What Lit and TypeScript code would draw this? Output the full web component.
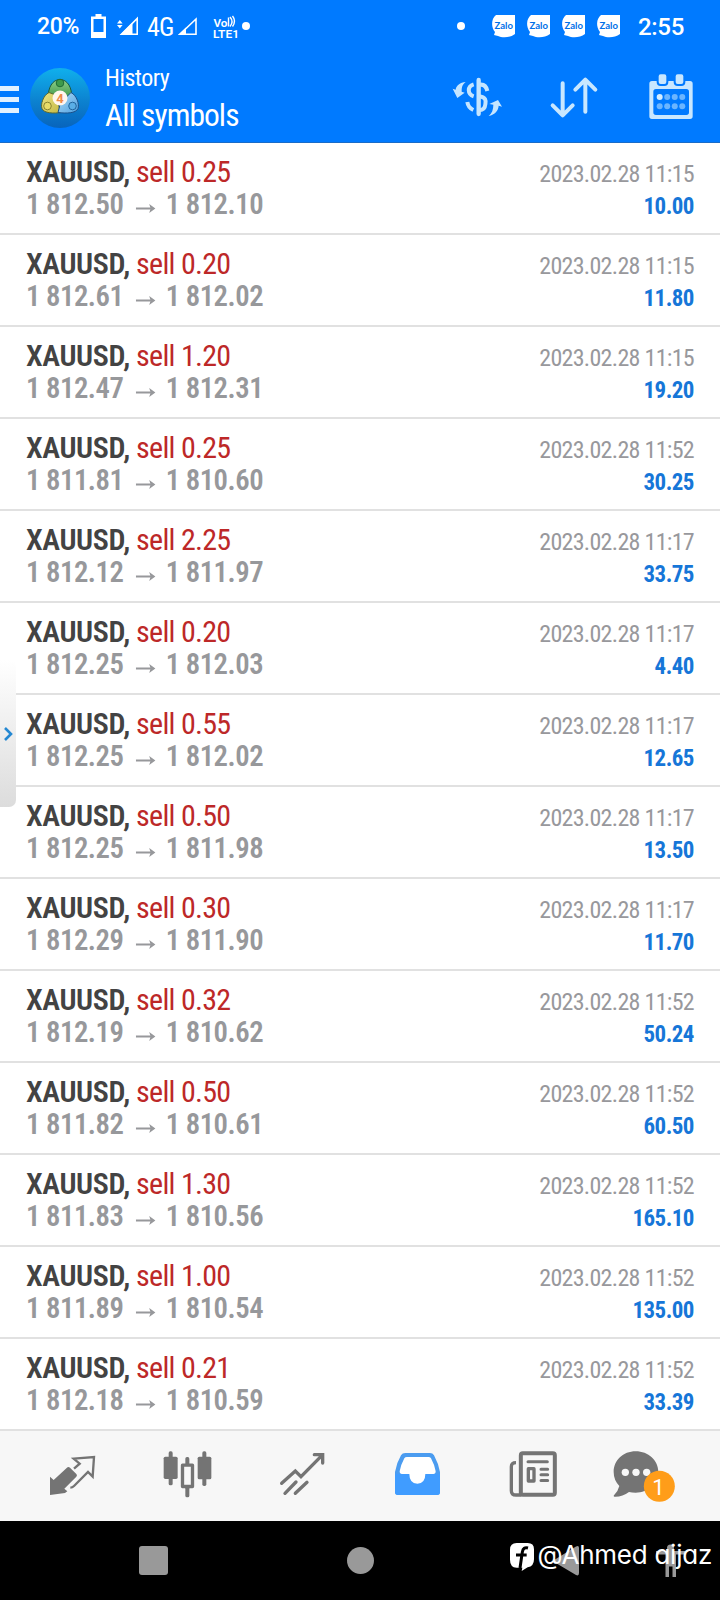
import { LitElement, html, css, svg } from "lit";
import { customElement, property } from "lit/decorators.js";

type Deal = [volume: string, open: string, close: string, time: string, profit: string];

const DEALS: Deal[] = [
  ["0.25", "1 812.50", "1 812.10", "11:15", "10.00"],
  ["0.20", "1 812.61", "1 812.02", "11:15", "11.80"],
  ["1.20", "1 812.47", "1 812.31", "11:15", "19.20"],
  ["0.25", "1 811.81", "1 810.60", "11:52", "30.25"],
  ["2.25", "1 812.12", "1 811.97", "11:17", "33.75"],
  ["0.20", "1 812.25", "1 812.03", "11:17", "4.40"],
  ["0.55", "1 812.25", "1 812.02", "11:17", "12.65"],
  ["0.50", "1 812.25", "1 811.98", "11:17", "13.50"],
  ["0.30", "1 812.29", "1 811.90", "11:17", "11.70"],
  ["0.32", "1 812.19", "1 810.62", "11:52", "50.24"],
  ["0.50", "1 811.82", "1 810.61", "11:52", "60.50"],
  ["1.30", "1 811.83", "1 810.56", "11:52", "165.10"],
  ["1.00", "1 811.89", "1 810.54", "11:52", "135.00"],
  ["0.21", "1 812.18", "1 810.59", "11:52", "33.39"],
];

@customElement("status-bar")
export class StatusBar extends LitElement {
  static styles = css`
    :host { display: flex; height: 52px; align-items: center; color: #fff; font-family: Roboto, sans-serif; }
    svg { display: block; flex: none; overflow: visible; }
    .left, .right { display: flex; align-items: center; height: 52px; }
    .left { padding-left: 37px; flex: 1; }
    .right { padding-right: 37px; }
    .charge { width: 42px; font-size: 23px; font-weight: 500; line-height: 52px; padding-top: 2px; letter-spacing: -0.3px; }
    .battery { margin-left: 12px; }
    .signal { margin-left: 11px; }
    .net { font-size: 26px; font-weight: 450; font-stretch: 85%; width: 27px; margin-left: 9px; line-height: 52px; padding-top: 2px; white-space: nowrap; letter-spacing: -0.8px; }
    .signal2 { margin-left: 4px; }
    .lte { margin: 2px 0 0 15px; }
    .dot { margin-left: 2px; }
    .clock { width: 45px; font-size: 24px; font-weight: 500; text-align: right; line-height: 52px; padding-top: 2px; white-space: nowrap; letter-spacing: -0.3px; }
    .zalo { margin-right: 12px; }
    .zalo-text { font: 700 8.6px Lato, sans-serif; fill: #0070e8; }
    .volte { font: 600 11.5px Roboto, sans-serif; fill: #fff; }
    .bubbles { display: flex; margin: 0 6px 0 27px; }
  `;
  render() {
    const bubble = html`<svg class="zalo" width="23" height="23" viewBox="0 0 23 23">
      <path fill="#fff" d="M4 0h19v19c-5 4-13 4-17 2l-4-1 1-3C-1 12-1 4 4 0z" />
      <text class="zalo-text" x="2.500" y="14" textLength="18.500" lengthAdjust="spacingAndGlyphs">Zalo</text>
    </svg>`;
    return html`
      <div class="left">
        <span class="charge">20%</span>
        <svg class="battery" width="15" height="24" viewBox="0 0 15 24">
          <path fill="#fff" fill-rule="evenodd" d="M4.500 0h6v2.500H15V24H0V2.500h4.500zM2.500 5v13h10V5z" />
        </svg>
        <svg class="signal" width="21" height="18" viewBox="0 0 21 18">
          <path fill="#fff" d="M0 6.500 2.800 3l2.800 3.500zM0 8h5.600L2.800 11.500z" />
          <path fill="none" stroke="#fff" stroke-width="1.600" d="M20.200 1.500v15.700H4.500z" />
          <path fill="#fff" d="M3 18 15.500 5.500V18z" />
        </svg>
        <span class="net">4G</span>
        <svg class="signal2" width="20" height="18" viewBox="0 0 20 18">
          <path fill="none" stroke="#fff" stroke-width="1.600" d="M18 2v15.200H2z" />
          <path fill="#fff" d="M0 18 8 10.500V18z" />
        </svg>
        <svg class="lte" width="27" height="22" viewBox="0 0 27 22">
          <text class="volte" x="0.500" y="10.500" textLength="14" lengthAdjust="spacingAndGlyphs">Vo</text>
          <path fill="none" stroke="#fff" stroke-width="1.400" d="M15.500 1.500v9M17 1q4 4.500 0 9.500M19.500 0q4 5 0 10.500" />
          <text class="volte" x="0" y="21.500" textLength="26" lengthAdjust="spacingAndGlyphs">LTE1</text>
        </svg>
        <svg class="dot" width="8" height="8" viewBox="0 0 8 8"><circle cx="4" cy="4" r="4" fill="#fff" /></svg>
      </div>
      <div class="right">
        <svg width="8" height="8" viewBox="0 0 8 8"><circle cx="4" cy="4" r="4" fill="#fff" /></svg>
        <div class="bubbles">${bubble}${bubble}${bubble}${bubble}</div>
        <span class="clock">2:55</span>
      </div>
    `;
  }
}

@customElement("app-header")
export class AppHeader extends LitElement {
  static styles = css`
    :host { display: flex; height: 91px; box-sizing: border-box; border-bottom: 1px solid #1a6cc8; color: #fff; font-family: Roboto, sans-serif; font-stretch: 75%; }
    svg { display: block; flex: none; }
    .menu { display: flex; flex-direction: column; gap: 6px; width: 19px; padding-top: 34px; margin-right: 11px; }
    .bar { height: 5px; background: #e2f1ff; }
    .logo { margin-top: 16px; }
    .four { font: 700 13px Roboto, sans-serif; fill: #ee8a48; }
    .titles { margin-left: 15px; padding-top: 10px; flex: 1; white-space: nowrap; }
    .small { font-size: 24px; line-height: 32px; height: 32px; letter-spacing: -0.5px; }
    .big { font-size: 31.5px; line-height: 44px; height: 44px; letter-spacing: -0.95px; }
    .actions { display: flex; margin-right: 1px; }
  `;
  render() {
    return html`
      <div class="menu"><div class="bar"></div><div class="bar"></div><div class="bar"></div></div>
      <svg class="logo" width="60" height="60" viewBox="0 0 60 60">
        <defs>
          <linearGradient id="sea" x1="0" y1="0" x2="0" y2="1"><stop offset="0" stop-color="#10b0ec" /><stop offset="0.550" stop-color="#0c82d0" /><stop offset="1" stop-color="#0864bc" /></linearGradient>
          <linearGradient id="green" x1="0" y1="0" x2="0" y2="1"><stop offset="0" stop-color="#8fd08a" /><stop offset="1" stop-color="#2c8a3c" /></linearGradient>
          <linearGradient id="gold" x1="0" y1="0" x2="1" y2="1"><stop offset="0" stop-color="#ece484" /><stop offset="1" stop-color="#c4b844" /></linearGradient>
          <linearGradient id="blue" x1="0" y1="0" x2="1" y2="1"><stop offset="0" stop-color="#b0dcf6" /><stop offset="1" stop-color="#4c9fe0" /></linearGradient>
        </defs>
        <circle cx="30" cy="30" r="30" fill="url(#sea)" />
        <path fill="url(#green)" stroke="#1a5a40" d="M18.500 30c-1-10 4-18.500 11.500-18.500s12.500 8.500 11.500 18.500l-6 4h-11z" />
        <path fill="url(#gold)" stroke="#5c6a30" d="M19 24.500c-6 3-8.500 12-7 16 2 5 12 5 19 4l-3-9-1-8z" />
        <path fill="url(#blue)" stroke="#1c4f88" d="M41 24.500c6 3 8.500 12 7 16-2 5-12 5-20 4l2-8 7-8z" />
        <circle cx="30" cy="15" r="3.800" fill="#3f9a4c" stroke="#1f6b35" />
        <circle cx="17.500" cy="38" r="3.800" fill="#e8dc68" stroke="#8a8430" />
        <circle cx="42.500" cy="38" r="3.800" fill="#5aaee6" stroke="#20639c" />
        <circle cx="30" cy="30" r="7.500" fill="#fff6ee" />
        <text class="four" x="30" y="34.700" text-anchor="middle">4</text>
      </svg>
      <div class="titles"><div class="small">History</div><div class="big">All symbols</div></div>
      <div class="actions">
        <svg width="97" height="90" viewBox="-36 156 291 270">
          <g fill="none" stroke="#c5e5ff" stroke-width="12">
            <path d="M116 240v102" stroke-width="13" stroke-linecap="round" />
            <path d="M142 273c-3-15-12-20-22-19M116 289c25 2 21 16 20 24-1 12-8 17-18 18" />
            <path d="M101 253c-20 6-19 30 0 36M82 306c2 14 9 20 18 24" />
          </g>
          <path fill="#c5e5ff" d="M38 266l9 3c2-13 13-21 30-23-10 8-12 15-12 29l9 3-22 16zM186 320l-10-3c-1 15-11 27-30 31 10-8 14-20 14-34l-12-2 26-12z" />
        </svg>
        <svg width="97" height="90" viewBox="255 156 291 270">
          <path fill="none" stroke="#c8e7ff" stroke-width="12" stroke-linecap="round" stroke-linejoin="round" d="M368 250v96M338 316l30 30 30-30M436 335v-96M406 269l30-30 30 30" />
        </svg>
        <svg width="97" height="90" viewBox="546 156 291 270">
          <path fill="#c8e7ff" fill-rule="evenodd" d="M636 243h114q8 0 8 8v98q0 8-8 8H636q-8 0-8-8v-98q0-8 8-8zM648 267q-8 0-8 8v62q0 8 8 8h91q8 0 8-8v-62q0-8-8-8z" />
          <path fill="#c8e7ff" stroke="#007aff" stroke-width="6" d="M662 220h11q9 0 9 9v17q0 9-9 9h-11q-9 0-9-9v-17q0-9 9-9zM713 220h11q9 0 9 9v17q0 9-9 9h-11q-9 0-9-9v-17q0-9 9-9z" />
          ${[0, 1, 2, 3].map((i) => svg`<circle cx=${659 + i * 22.6} cy="291" r="9" fill=${i ? "#6bb5ff" : "#d5edff"} /><circle cx=${659 + i * 22.6} cy="319" r="9" fill="#6bb5ff" />`)}
        </svg>
      </div>
    `;
  }
}

@customElement("deal-row")
export class DealRow extends LitElement {
  @property({ attribute: false }) deal!: Deal;
  static styles = css`
    :host { display: flex; justify-content: space-between; height: 92px; box-sizing: border-box; border-bottom: 2px solid #e1e1e1; padding: 0 26px; background: #fff; font-family: Roboto, sans-serif; font-stretch: 75%; white-space: nowrap; }
    .main { padding-top: 13px; font-size: 30px; line-height: 32px; }
    .side { padding-top: 15px; font-size: 24px; line-height: 32px; text-align: right; color: #98989c; letter-spacing: -0.7px; }
    .symbol { color: #434343; font-weight: 600; letter-spacing: -0.4px; }
    .sell { color: #bd2828; letter-spacing: -0.72px; }
    .prices { display: flex; color: #97989b; font-weight: 600; letter-spacing: -0.5px; transform: scaleX(0.955); transform-origin: 0 0; }
    .arrow { display: block; margin: 14px 10.6px 0 12.7px; }
    .profit { color: #1676d8; font-weight: 700; letter-spacing: -0.6px; transform: scaleX(0.955); transform-origin: 100% 0; }
  `;
  render() {
    const [volume, open, close, time, profit] = this.deal;
    return html`
      <div class="main">
        <div><span class="symbol">XAUUSD,</span><span class="sell"> sell ${volume}</span></div>
        <div class="prices">
          <span>${open}</span>
          <svg class="arrow" width="21" height="12" viewBox="0 0 21 12"><path fill="none" stroke="#97989b" stroke-width="2" d="M0 6.500h18" /><path fill="#97989b" d="M14 2l6.500 4.500L14 11l1.500-4.500z" /></svg>
          <span>${close}</span>
        </div>
      </div>
      <div class="side"><div>2023.02.28 ${time}</div><div class="profit">${profit}</div></div>
    `;
  }
}

@customElement("tab-bar")
export class TabBar extends LitElement {
  static styles = css`
    :host { display: flex; height: 90px; padding: 0 15px; box-sizing: border-box; background: #f7f7f7; }
    svg { display: block; flex: none; }
    .count { font: 400 66px Roboto, sans-serif; fill: #fff; }
  `;
  render() {
    return html`
      <svg width="115" height="90" viewBox="45 33 345 270">
        <path fill="#747474" d="M150 170l11 10 39-36q5-5 10-1l19 19q4 4 0 8l-36 36 9 8-7 5-45 6z" />
        <path fill="none" stroke="#747474" stroke-width="7" d="M222 146l17-15-18-15 61-5-4 59-14-14-42 42q-5 5-11 5" />
      </svg>
      <svg width="115" height="90" viewBox="390 33 345 270">
        <g fill="#747474">
          <rect x="506" y="94" width="12" height="102" rx="5" /><rect x="491" y="110" width="42" height="67" rx="5" />
          <rect x="607" y="94" width="12" height="104" rx="5" /><rect x="593" y="110" width="41" height="68" rx="5" />
          <rect x="556" y="111" width="12" height="24" rx="5" /><rect x="556" y="200" width="12" height="32" rx="5" />
        </g>
        <rect x="547.500" y="135.500" width="30" height="64" fill="none" stroke="#747474" stroke-width="10" stroke-linejoin="round" />
      </svg>
      <svg width="115" height="90" viewBox="735 33 345 270">
        <path fill="none" stroke="#747474" stroke-width="10" stroke-linecap="round" d="M845 190l41-37 17 17 63-64M943 104h25v25M855 220l33-34M886 220l35-33" />
      </svg>
      <svg width="115" height="90" viewBox="0 33 345 270">
        <path fill="#4b9cf0" d="M136 99h74q8 0 12 7 14 26 18 50v60q0 9-9 9H114q-9 0-9-9v-60q5-28 18-50 4-7 13-7z" />
        <path fill="#409cff" d="M105 162h135v54q0 9-9 9H114q-9 0-9-9z" />
        <path fill="#fff" d="M141 111h64q6 0 8 4 10 18 14 39 0 8-7 8h-24q0 28-24 29-24-1-24-29h-22q-7 0-7-8 4-21 14-39 2-4 8-4z" />
      </svg>
      <svg width="115" height="90" viewBox="345 33 345 270">
        <g fill="none" stroke="#747474">
          <rect x="482.500" y="99.500" width="102" height="125" rx="6" stroke-width="12" />
          <path stroke-width="10" d="M468 128q-14 0-14 12v72q0 13 14 13h16" />
          <path stroke-width="9" stroke-linecap="round" d="M504 125.500h58M543 147.500h20M543 164.500h20M543 181.500h20" />
          <rect x="505" y="146" width="17" height="37" stroke-width="10" stroke-linejoin="round" />
        </g>
      </svg>
      <svg width="115" height="90" viewBox="690 33 345 270">
        <path fill="#747474" d="M827 94c38 0 68 27 68 62s-30 62-68 62q-11 0-20-2-20 15-44 14-4-1-1-4 13-14 16-28-17-18-17-42c0-35 28-62 66-62z" />
        <g fill="#f7f7f7"><circle cx="796" cy="157" r="11" /><circle cx="828" cy="157" r="11" /><circle cx="860" cy="157" r="11" /></g>
        <circle cx="898" cy="199" r="46.500" fill="#ff9d19" />
        <text class="count" x="895" y="224" text-anchor="middle">1</text>
      </svg>
    `;
  }
}

@customElement("system-nav")
export class SystemNav extends LitElement {
  static styles = css`
    :host { display: block; position: relative; height: 79px; background: #000; overflow: hidden; }
    .keys { display: block; }
    .mark { position: absolute; right: 8px; top: 17px; display: flex; align-items: center; gap: 4px; color: #fff; }
    .name { font: 400 26px/34px Inter, sans-serif; font-feature-settings: "cv11"; white-space: nowrap; letter-spacing: -0.25px; }
    .badge { display: block; margin-top: 4px; }
  `;
  render() {
    return html`
      <svg class="keys" width="720" height="79" viewBox="0 0 720 79" fill="#999">
        <rect x="139" y="25" width="29" height="29" rx="3" />
        <circle cx="360.500" cy="39.500" r="13.500" />
        <path d="M555 38.500q-3 1.500 0 3l21 12.500q3 1.500 3-2V27q0-3-3-1.500z" />
        <circle cx="670.500" cy="27" r="3.500" />
        <path d="M656 30h29v3.500h-9V56h-3.500V45.500h-3.500V56h-3.500V33.500H656z" />
      </svg>
      <div class="mark">
        <svg class="badge" width="24" height="28" viewBox="0 0 72 84">
          <path fill="#fff" d="M20 0h33q19 0 19 19v30Q72 70 53 73L35 84l2-10H20Q0 73 0 50V20Q0 0 20 0z" />
          <path fill="none" stroke="#000" stroke-width="9" d="M54 15q-14-4-17 12L30 75M18 36h32" />
        </svg>
        <span class="name">@Ahmed aijaz</span>
      </div>
    `;
  }
}

@customElement("app-root")
export class AppRoot extends LitElement {
  static styles = css`
    :host { display: block; position: relative; width: 720px; height: 1600px; overflow: hidden; background: #fff; }
    .top { background: #007aff; }
    .drawer { position: absolute; left: 0; top: 660px; width: 16px; height: 147px; border-radius: 0 6px 7px 0; background: linear-gradient(#fff, #dcdcdc); }
    .chevron { display: block; margin: 67px 0 0 3px; }
  `;
  render() {
    return html`
      <div class="top"><status-bar></status-bar><app-header></app-header></div>
      ${DEALS.map((deal) => html`<deal-row .deal=${deal}></deal-row>`)}
      <tab-bar></tab-bar>
      <system-nav></system-nav>
      <div class="drawer">
        <svg class="chevron" width="11" height="14" viewBox="0 0 11 14"><path fill="none" stroke="#2588d2" stroke-width="2.600" d="M2 1l6 6-6 6" /></svg>
      </div>
    `;
  }
}
